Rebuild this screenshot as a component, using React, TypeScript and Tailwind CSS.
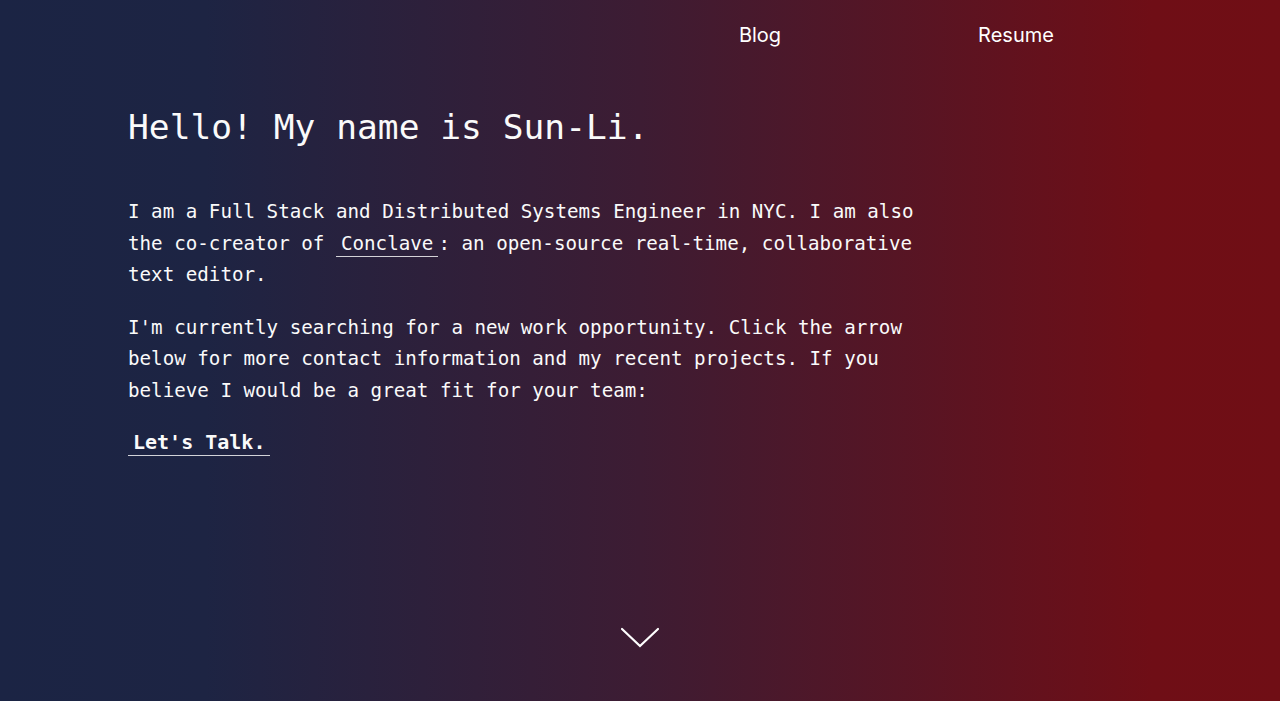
import React from "react";

const mono = "font-['DejaVu_Sans_Mono','Liberation_Mono',monospace]";

function Nav() {
  return (
    <nav className="flex justify-end pr-[136px] pt-[20px] font-['Inter','Noto_Sans',sans-serif] text-[20px] text-white">
      <a href="#blog" className="block w-[256px] text-center leading-[30px]">
        Blog
      </a>
      <a href="#resume" className="block w-[256px] text-center leading-[30px]">
        Resume
      </a>
    </nav>
  );
}

function Chevron() {
  return (
    <svg width="40" height="22" viewBox="0 0 40 22" fill="none" className="block">
      <polyline points="2,2 20,19 38,2" stroke="white" strokeWidth="2.2" strokeLinecap="round" strokeLinejoin="miter" />
    </svg>
  );
}

export default function App() {
  return (
    <div className="flex min-h-[701px] flex-col bg-[linear-gradient(90deg,#1b2444_0%,#1d2443_16%,#3d1c33_50%,#6f0e16_90%,#700e15_100%)] text-[#fafafa]">
      <Nav />

      <main className={`w-[928px] pl-[128px] pt-[56px] ${mono}`}>
        <h1 className="text-[34.6px] leading-[42px] font-normal">Hello! My name is Sun-Li.</h1>

        <p className="mt-[48px] text-[19.2px] leading-[31.5px]">
          I am a Full Stack and Distributed Systems Engineer in NYC. I am also the co-creator of{" "}
          <a href="#conclave" className="inline-block border-b border-white/80 px-[5px] leading-[24px]">
            Conclave
          </a>
          : an open-source real-time, collaborative text editor.
        </p>

        <p className="mt-[21px] text-[19.2px] leading-[31.5px]">
          I'm currently searching for a new work opportunity. Click the arrow below for more contact information and my recent
          projects. If you believe I would be a great fit for your team:
        </p>

        <div className="mt-[23px]">
          <a href="#contact" className="inline-block border-b border-white/80 px-[5px] text-[20px] leading-[26px] font-bold">
            Let's Talk.
          </a>
        </div>
      </main>

      <div className="mt-auto flex justify-center pb-[52px]">
        <Chevron />
      </div>
    </div>
  );
}
